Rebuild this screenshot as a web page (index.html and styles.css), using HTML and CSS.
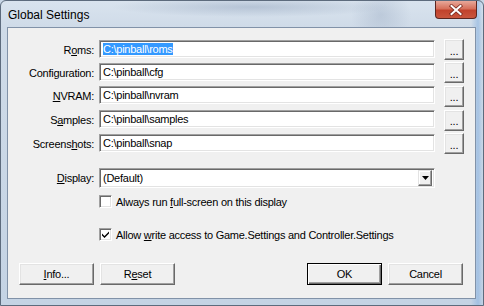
FILE: index.html
```html
<!DOCTYPE html>
<html>
<head>
<meta charset="utf-8">
<link rel="stylesheet" href="styles.css">
</head>
<body>
<div class="window">
  <div class="titlebar">
    <span class="title">Global Settings</span>
    <div class="close">
      <svg width="16" height="12" viewBox="0 0 16 12"><path d="M3.5 2 L12.5 10 M12.5 2 L3.5 10" stroke="#7a2a20" stroke-width="3.6" stroke-linecap="square"/><path d="M3.5 2 L12.5 10 M12.5 2 L3.5 10" stroke="#ffffff" stroke-width="2" stroke-linecap="square"/></svg>
    </div>
  </div>
  <div class="client">
    <div class="paths">
      <span class="lbl">R<u>o</u>ms:</span>
      <div class="edit"><span class="sel">C:\pinball\roms</span></div>
      <div class="btn browse">...</div>

      <span class="lbl">Configuration:</span>
      <div class="edit">C:\pinball\cfg</div>
      <div class="btn browse">...</div>

      <span class="lbl"><u>N</u>VRAM:</span>
      <div class="edit">C:\pinball\nvram</div>
      <div class="btn browse">...</div>

      <span class="lbl">S<u>a</u>mples:</span>
      <div class="edit">C:\pinball\samples</div>
      <div class="btn browse">...</div>

      <span class="lbl">Screens<u>h</u>ots:</span>
      <div class="edit">C:\pinball\snap</div>
      <div class="btn browse">...</div>
    </div>

    <div class="display-row">
      <span class="lbl"><u>D</u>isplay:</span>
      <div class="combo">
        <span class="combo-text">(Default)</span>
        <div class="drop"><svg width="7" height="4" viewBox="0 0 7 4"><path d="M0 0 H7 L3.5 4 Z" fill="#000"/></svg></div>
      </div>
    </div>

    <div class="check first">
      <span class="box"></span>
      <span>Always run <u>f</u>ull-screen on this display</span>
    </div>
    <div class="check second">
      <span class="box"><svg width="9" height="9" viewBox="0 0 9 9"><path d="M1 3.5 L3.5 6 L8 1.5 V3.5 L3.5 8 L1 5.5 Z" fill="#000"/></svg></span>
      <span>Allow <u>w</u>rite access to Game.Settings and Controller.Settings</span>
    </div>

    <div class="buttons">
      <div class="left">
        <div class="btn push"><u>I</u>nfo...</div>
        <div class="btn push">R<u>e</u>set</div>
      </div>
      <div class="right">
        <div class="btn push default">OK</div>
        <div class="btn push">Cancel</div>
      </div>
    </div>
  </div>
</div>
</body>
</html>
```

FILE: styles.css
```css
html, body {
  margin: 0;
  padding: 0;
  width: 484px;
  height: 306px;
  overflow: hidden;
  background: #c8d6e6;
}

.window {
  box-sizing: border-box;
  width: 484px;
  height: 306px;
  display: flex;
  flex-direction: column;
  border: 1px solid #5d6b7d;
  border-radius: 6px 6px 0 0;
  background:
    radial-gradient(ellipse 140px 10px at 250px 6px, rgba(120,140,170,0.35), rgba(120,140,170,0) 100%),
    radial-gradient(ellipse 30px 30px at 380px 14px, rgba(120,140,170,0.25), rgba(120,140,170,0) 100%),
    linear-gradient(90deg, rgba(255,255,255,0) 470px, rgba(140,180,225,0.6) 477px, rgba(255,255,255,0) 482px),
    linear-gradient(180deg, #d9e3ee 0px, #cfdbe8 26px, #c4d3e4 100%);
  font-family: "Liberation Sans", Arial, sans-serif;
  font-size: 11px;
  letter-spacing: -0.25px;
  color: #000;
}

.titlebar {
  height: 26px;
  display: flex;
  align-items: flex-start;
  justify-content: space-between;
}

.title {
  font-family: "Liberation Sans", Arial, sans-serif;
  font-size: 12px;
  letter-spacing: 0;
  margin: 7px 0 0 7px;
  color: #000;
}

.close {
  width: 42px;
  height: 18px;
  margin-right: 6px;
  box-sizing: border-box;
  border: 1px solid #5b2620;
  border-top: none;
  border-radius: 0 0 4px 4px;
  background: linear-gradient(180deg, #e8a89a 0%, #d6705b 45%, #c1422c 55%, #c9553d 100%);
  display: flex;
  align-items: center;
  justify-content: center;
}

.client {
  box-sizing: border-box;
  margin: 0 7px 6px 6px;
  flex: 1;
  background: #f0f0f0;
  border: 1px solid #8192a8;
  padding-top: 11px;
  display: flex;
  flex-direction: column;
}

.paths {
  display: grid;
  grid-template-columns: 86px 340px 20px;
  grid-template-rows: 21px 21px 22px 22px 21px;
  column-gap: 5px;
  row-gap: 2px;
  align-items: center;
}

.lbl {
  text-align: right;
  white-space: nowrap;
}

.edit {
  box-sizing: border-box;
  width: 336px;
  height: 18px;
  align-self: start;
  margin-top: 1px;
  border-top: 1px solid #a0a0a0;
  border-left: 1px solid #a0a0a0;
  border-right: 1px solid #ffffff;
  border-bottom: 1px solid #ffffff;
  box-shadow: inset 1px 1px 0 #696969, inset -1px -1px 0 #e3e3e3;
  background: #fff;
  padding: 2px 0 0 3px;
  line-height: 13px;
  white-space: nowrap;
}

.sel {
  background: #3399ff;
  color: #fff;
}

.btn {
  box-sizing: border-box;
  background: #f0f0f0;
  border-top: 1px solid #ffffff;
  border-left: 1px solid #ffffff;
  border-right: 1px solid #696969;
  border-bottom: 1px solid #696969;
  box-shadow: inset -1px -1px 0 #a0a0a0, inset 1px 1px 0 #e3e3e3;
  display: flex;
  align-items: center;
  justify-content: center;
}

.browse {
  width: 20px;
  height: 21px;
  padding-top: 2px;
}

.display-row {
  display: flex;
  align-items: center;
  margin-top: 14px;
  gap: 5px;
}

.display-row .lbl {
  width: 86px;
}

.combo {
  box-sizing: border-box;
  width: 336px;
  height: 20px;
  border-top: 1px solid #a0a0a0;
  border-left: 1px solid #a0a0a0;
  border-right: 1px solid #ffffff;
  border-bottom: 1px solid #ffffff;
  box-shadow: inset 1px 1px 0 #696969, inset -1px -1px 0 #e3e3e3;
  background: #fff;
  display: flex;
  align-items: center;
  justify-content: space-between;
  padding: 0 2px 0 3px;
}

.drop {
  box-sizing: border-box;
  width: 14px;
  height: 16px;
  background: #f0f0f0;
  border-top: 1px solid #e3e3e3;
  border-left: 1px solid #e3e3e3;
  border-right: 1px solid #696969;
  border-bottom: 1px solid #696969;
  box-shadow: inset -1px -1px 0 #a0a0a0, inset 1px 1px 0 #ffffff;
  display: flex;
  align-items: center;
  justify-content: center;
}

.check {
  display: flex;
  align-items: center;
  gap: 4px;
  margin-left: 91px;
}

.check.first {
  margin-top: 7px;
}

.check.second {
  margin-top: 20px;
}

.box {
  box-sizing: border-box;
  width: 13px;
  height: 13px;
  border-top: 1px solid #a0a0a0;
  border-left: 1px solid #a0a0a0;
  border-right: 1px solid #ffffff;
  border-bottom: 1px solid #ffffff;
  box-shadow: inset 1px 1px 0 #696969, inset -1px -1px 0 #e3e3e3;
  background: #fff;
  display: flex;
  align-items: center;
  justify-content: center;
}

.buttons {
  display: flex;
  justify-content: space-between;
  margin-top: 22px;
  padding: 0 12px 0 11px;
}

.left, .right {
  display: flex;
  gap: 6px;
}

.push {
  width: 75px;
  height: 22px;
}

.default {
  border: 1px solid #000;
  box-shadow: inset 1px 1px 0 #ffffff, inset -1px -1px 0 #696969, inset -2px -2px 0 #a0a0a0;
}
```
